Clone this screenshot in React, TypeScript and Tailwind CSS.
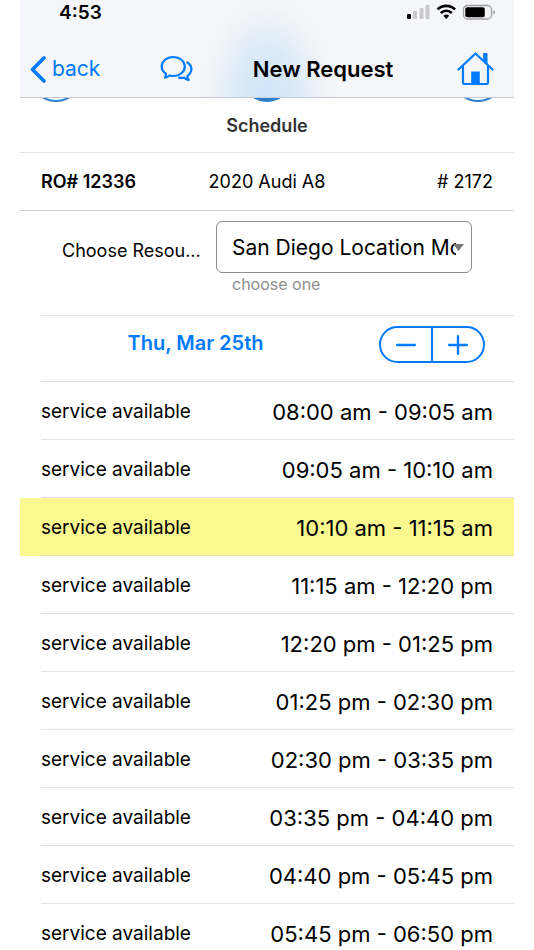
import { useState } from "react";

const DAYS = ["Wed, Mar 24th", "Thu, Mar 25th", "Fri, Mar 26th"];

const SLOTS = [
  { start: "08:00 am", end: "09:05 am" },
  { start: "09:05 am", end: "10:10 am" },
  { start: "10:10 am", end: "11:15 am" },
  { start: "11:15 am", end: "12:20 pm" },
  { start: "12:20 pm", end: "01:25 pm" },
  { start: "01:25 pm", end: "02:30 pm" },
  { start: "02:30 pm", end: "03:35 pm" },
  { start: "03:35 pm", end: "04:40 pm" },
  { start: "04:40 pm", end: "05:45 pm" },
  { start: "05:45 pm", end: "06:50 pm" },
];

function StatusIcons() {
  return (
    <svg width="90" height="18" viewBox="0 0 90 18" aria-hidden="true">
      {/* Signal */}
      <rect x="1" y="10" width="4" height="5" rx="1" fill="#000" />
      <rect x="7" y="7" width="4" height="8" rx="1" fill="#c9c9cd" />
      <rect x="13.5" y="4" width="4" height="11" rx="1" fill="#c9c9cd" />
      <rect x="19.5" y="1" width="4" height="14" rx="1" fill="#c9c9cd" />
      {/* Wifi */}
      <g fill="none" stroke="#000" strokeWidth="2.6">
        <path d="M31.5 5.4a12.7 12.7 0 0 1 17.6 0" />
        <path d="M34.8 9a8 8 0 0 1 11 0" />
      </g>
      <path d="M37.4 11.8a4.4 4.4 0 0 1 5.8 0L40.3 15z" fill="#000" />
      {/* Battery */}
      <rect x="57.5" y="1.5" width="28" height="13.5" rx="4" fill="none" stroke="#a0a0a3" strokeWidth="1.3" />
      <rect x="59.3" y="3.3" width="19.5" height="10" rx="2" fill="#000" />
      <path d="M87.2 6v4.6c1.2-.4 1.8-1.3 1.8-2.3s-.6-1.9-1.8-2.3z" fill="#a0a0a3" />
    </svg>
  );
}

function ChatIcon() {
  return (
    <svg width="33" height="28" viewBox="0 0 33 28" fill="none" stroke="#007aff" strokeWidth="2.2" strokeLinejoin="round" strokeLinecap="round" aria-hidden="true">
      <path d="M13.2 2C6.7 2 1.700 6.200 1.700 11.500c0 3 1.600 5.600 4.300 7.300 0 1.500-.3 2.700-1 3.800 1.800-.3 3.300-1 4.500-2.100 1.200.3 2.400.5 3.700.5 6.500 0 11.600-4.200 11.600-9.500S19.700 2 13.200 2z" />
      <path d="M27.300 7.500c2.700 1.600 4.100 3.800 4.100 6.600 0 2.900-1.400 5.200-4 6.800 0 1.500.4 2.800 1.300 4.100-1.900-.3-3.400-1.200-4.600-2.400-1.900.3-3.500.3-5 0" />
    </svg>
  );
}

function HomeIcon() {
  return (
    <svg width="37" height="34" viewBox="0 0 37 34" fill="none" stroke="#007aff" strokeWidth="2.2" strokeLinejoin="round" strokeLinecap="round" aria-hidden="true">
      <path d="M1.5 17.5 18.5 1.5l17 16" />
      <path d="M6 14.5v15.700c0 1 .8 1.800 1.800 1.800h21.400c1 0 1.800-.8 1.800-1.800V14.500" />
      <path d="M27 1.500h3v11L27 9.500z" fill="#007aff" strokeWidth="1" />
      <path d="M14.200 32V19.500h8.600V32z" fill="#007aff" stroke="none" />
    </svg>
  );
}

export default function App() {
  const [day, setDay] = useState(1);
  const [selected, setSelected] = useState(2);

  return (
    <div className="min-h-screen bg-white px-5 font-['Inter','Liberation_Sans',sans-serif] text-black">
      {/* Nav bar */}
      <header className="border-b border-[#c9cbd0] bg-[#f5f6f9] bg-[radial-gradient(ellipse_66px_96px_at_50%_95%,#d0e5f8_0%,#d6e8f8_30%,#e4eef8_60%,#f0f4f9_85%,#f5f6f9_100%)]">
        <div className="flex h-[26px] items-center justify-between pl-[39px] pr-[18px]">
          <span className="text-[19px] font-semibold leading-6">4:53</span>
          <StatusIcons />
        </div>
        <div className="flex h-[71px] items-center justify-between pb-[3px] pl-[10px] pr-5 pt-[18px]">
          <button className="flex items-center gap-[6px] text-[21px] leading-7 text-[#007aff]">
            <svg width="16" height="27" viewBox="0 0 16 27" fill="none" stroke="#007aff" strokeWidth="3.6" strokeLinecap="round" strokeLinejoin="round" aria-hidden="true">
              <path d="M14 2 2.5 13.5 14 25" />
            </svg>
            back
          </button>
          <button aria-label="Messages">
            <ChatIcon />
          </button>
          <h1 className="mr-1 text-[22px] font-semibold leading-7">New Request</h1>
          <button aria-label="Home">
            <HomeIcon />
          </button>
        </div>
      </header>

      {/* Wizard steps, scrolled under the nav bar */}
      <div className="flex h-1 items-end justify-between overflow-hidden px-[10px]">
        <span className="size-[52px] shrink-0 rounded-full border-2 border-[#2f80cc]" />
        <span className="size-[52px] shrink-0 rounded-full bg-[#2f80cc]" />
        <span className="size-[52px] shrink-0 rounded-full border-2 border-[#2f80cc]" />
      </div>
      <h2 className="border-b border-[#e2e2e4] pb-[14px] pt-3 text-center text-[18px] font-semibold leading-6 text-[#333]">
        Schedule
      </h2>

      {/* Vehicle */}
      <div className="grid min-h-[58px] grid-cols-[1fr_auto_1fr] items-center border-b border-[#d0d0d0] px-[21px] text-[18px] leading-6">
        <span className="font-semibold">RO# 12336</span>
        <span>2020 Audi A8</span>
        <span className="text-right"># 2172</span>
      </div>

      <div className="pl-[21px]">
        {/* Resource */}
        <div className="flex border-b border-[#e2e2e4] pb-5 pl-[21px] pr-[42px] pt-[10px]">
          <label htmlFor="resource" className="w-[154px] shrink-0 pt-[18px] text-[18px] leading-6">
            Choose Resou...
          </label>
          <div className="min-w-0 flex-1">
            <div className="relative">
              <select
                id="resource"
                className="block h-[52px] w-full appearance-none rounded-md border border-[#8e8e8e] bg-white px-[15px] pt-px text-[21px] leading-7"
              >
                <option>San Diego Location Mo</option>
              </select>
              <svg className="pointer-events-none absolute right-2 top-[23px]" width="11" height="7" viewBox="0 0 11 7" aria-hidden="true">
                <path d="M0 0h11L5.500 7z" fill="#777" />
              </svg>
            </div>
            <p className="pl-4 pt-px text-[16px] leading-[21px] text-[#8e8e8e]">choose one</p>
          </div>
        </div>

        {/* Day */}
        <div className="flex h-[66px] items-start border-b border-[#e2e2e4] pr-[29px] pt-[10px]">
          <p className="flex-1 pr-[29px] pt-[3px] text-center text-[20px] font-semibold leading-7 text-[#007aff]">{DAYS[day]}</p>
          <div className="flex h-[37px] w-[106px] divide-x-2 divide-[#007aff] overflow-hidden rounded-full border-2 border-[#007aff]">
            <button
              aria-label="Previous day"
              onClick={() => setDay(Math.max(0, day - 1))}
              className="flex flex-1 items-center justify-center"
            >
              <svg width="20" height="20" viewBox="0 0 20 20" stroke="#007aff" strokeWidth="2.4" strokeLinecap="round" aria-hidden="true">
                <path d="M1.2 10h17.600" />
              </svg>
            </button>
            <button
              aria-label="Next day"
              onClick={() => setDay(Math.min(DAYS.length - 1, day + 1))}
              className="flex flex-1 items-center justify-center"
            >
              <svg width="20" height="20" viewBox="0 0 20 20" stroke="#007aff" strokeWidth="2.4" strokeLinecap="round" aria-hidden="true">
                <path d="M1.2 10h17.600M10 1.200v17.600" />
              </svg>
            </button>
          </div>
        </div>
      </div>

      {/* Slots */}
      <ul>
        {SLOTS.map((slot, i) => (
          <li key={slot.start} className={i === selected ? "bg-[#faf88f] pl-[21px]" : "pl-[21px]"}>
            <button
              onClick={() => setSelected(i)}
              className={`flex h-[58px] w-full items-center justify-between pr-[21px] pt-[2px] ${
                i === SLOTS.length - 1 ? "" : i === selected ? "border-b border-[#e3e19a]" : "border-b border-[#e2e2e4]"
              }`}
            >
              <span className="text-[19px] leading-7">service available</span>
              <span className="text-[22px] leading-7">
                {slot.start} - {slot.end}
              </span>
            </button>
          </li>
        ))}
      </ul>
    </div>
  );
}
